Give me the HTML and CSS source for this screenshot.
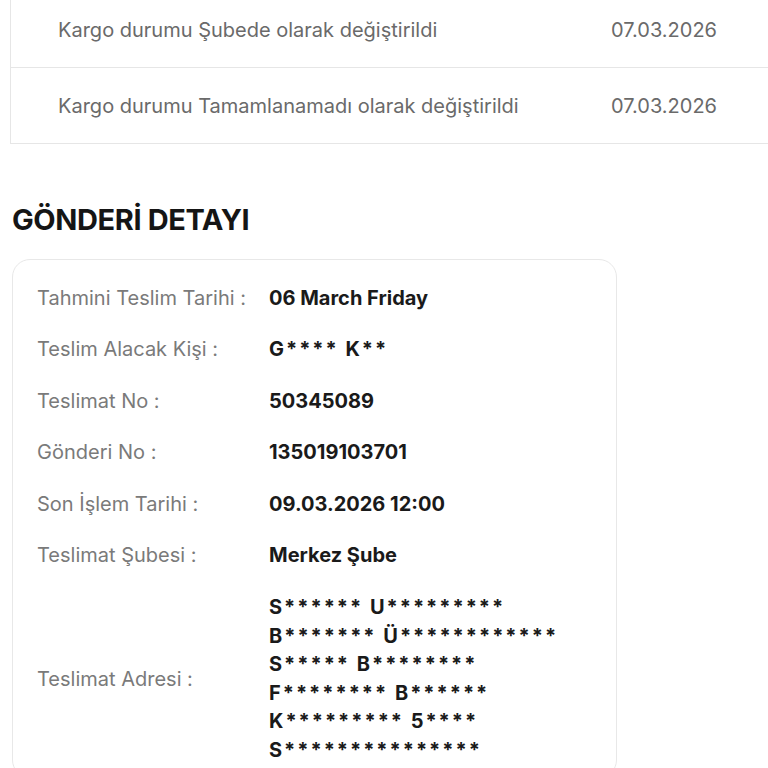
FILE: index.html
```html
<!DOCTYPE html>
<html lang="tr">
<head>
<meta charset="utf-8">
<link rel="stylesheet" href="styles.css">
</head>
<body>
<div class="page">
  <div class="history">
    <div class="hrow"><span class="htext">Kargo durumu Şubede olarak değiştirildi</span><span class="hdate">07.03.2026</span></div>
    <div class="hrow"><span class="htext">Kargo durumu Tamamlanamadı olarak değiştirildi</span><span class="hdate">07.03.2026</span></div>
  </div>
  <h2 class="title">GÖNDERİ DETAYI</h2>
  <div class="card">
    <div class="drow"><span class="label">Tahmini Teslim Tarihi :</span><span class="value">06 March Friday</span></div>
    <div class="drow"><span class="label">Teslim Alacak Kişi :</span><span class="value masked">G**** K**</span></div>
    <div class="drow"><span class="label">Teslimat No :</span><span class="value">50345089</span></div>
    <div class="drow"><span class="label">Gönderi No :</span><span class="value">135019103701</span></div>
    <div class="drow"><span class="label">Son İşlem Tarihi :</span><span class="value">09.03.2026 12:00</span></div>
    <div class="drow"><span class="label">Teslimat Şubesi :</span><span class="value">Merkez Şube</span></div>
    <div class="drow addr"><span class="label">Teslimat Adresi :</span><span class="value masked lines">S****** U*********<br>B******* Ü************<br>S***** B********<br>F******** B******<br>K********* 5****<br>S***************</span></div>
  </div>
</div>
</body>
</html>
```
FILE: styles.css
```css
html, body { margin: 0; padding: 0; background: #fff; overflow: hidden; }
body { font-family: Inter, "Noto Sans", sans-serif; color: #1a1a1a; }
.page { width: 768px; height: 768px; overflow: hidden; }
.history {
  margin: -8px 0 0 10px;
  width: 780px;
  border: 1px solid #e6e6e6;
  border-top: none;
}
.hrow {
  height: 75px;
  display: flex;
  align-items: center;
  justify-content: space-between;
  padding: 0 74px 0 47px;
  border-top: 1px solid #e6e6e6;
  font-size: 20px;
  color: #6a6a6a;
}
.hrow:first-child { border-top: none; }
.title {
  margin: 52px 0 0 12px;
  font-size: 29px;
  font-weight: 700;
  letter-spacing: -0.4px;
  line-height: 48px;
  color: #151515;
}
.card {
  margin: 15px 0 0 12px;
  width: 567px;
  border: 1px solid #e8e8e8;
  border-radius: 18px;
  padding: 12px 12px 0 24px;
}
.drow {
  display: flex;
  align-items: center;
  min-height: 51.5px;
}
.label {
  width: 232px;
  flex: none;
  font-size: 20px;
  color: #7a7a7a;
}
.value {
  font-size: 20px;
  font-weight: 700;
  color: #1a1a1a;
}
.masked { letter-spacing: 2px; }
.addr { padding: 12px 0; }
.lines { line-height: 28.6px; }
```
